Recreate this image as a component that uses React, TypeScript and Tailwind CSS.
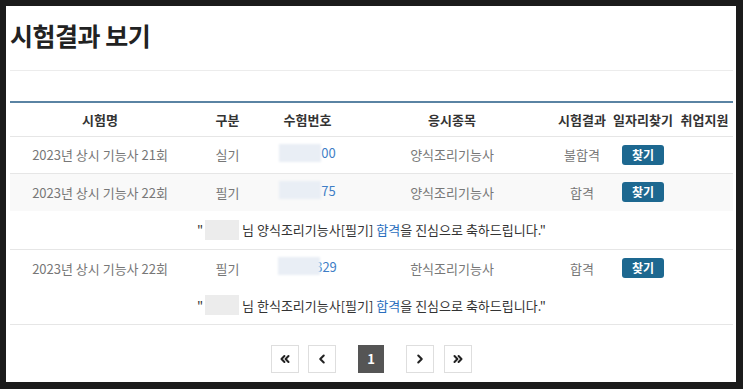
import { ChevronLeft, ChevronRight, ChevronsLeft, ChevronsRight } from 'lucide-react';

const font = { fontFamily: '"Noto Sans CJK KR", "Noto Sans", sans-serif' };

interface ResultRow {
  exam: string;
  type: string;
  numTail: string;
  subject: string;
  result: string;
  shaded?: boolean;
  message?: string;
  numCover?: number;
}

const rows: ResultRow[] = [
  { exam: '2023년 상시 기능사 21회', type: '실기', numTail: '00', subject: '양식조리기능사', result: '불합격' },
  {
    exam: '2023년 상시 기능사 22회',
    type: '필기',
    numTail: '75',
    subject: '양식조리기능사',
    result: '합격',
    shaded: true,
    message: '양식조리기능사[필기]',
  },
  {
    exam: '2023년 상시 기능사 22회',
    type: '필기',
    numTail: '329',
    subject: '한식조리기능사',
    result: '합격',
    message: '한식조리기능사[필기]',
    numCover: 5,
  },
];

export default function App() {
  return (
    <div className="w-[743px] h-[389px] bg-[#1b1b1b] pt-[6px] pl-[6px] pr-[7px] pb-[7px]" style={font}>
      <div className="h-full bg-white pl-[4px] pr-[3px]">
        {/* 제목 */}
        <div className="pt-[13px] pb-[19px] border-b border-[#ececec]">
          <h1 className="text-[25px] leading-[32px] font-bold text-[#222] tracking-[-0.5px]">시험결과 보기</h1>
        </div>

        <table className="w-full table-fixed mt-[30px] border-t-2 border-[#5a83a3] text-[13px]">
          <colgroup>
            <col className="w-[180px]" />
            <col className="w-[75px]" />
            <col className="w-[85px]" />
            <col className="w-[204px]" />
            <col className="w-[56px]" />
            <col className="w-[66px]" />
            <col className="w-[57px]" />
          </colgroup>
          <thead>
            <tr className="h-[34px] border-b border-[#e6e6e6] text-[#333] font-bold">
              <th className="font-bold">시험명</th>
              <th className="font-bold">구분</th>
              <th className="font-bold">수험번호</th>
              <th className="font-bold">응시종목</th>
              <th className="font-bold whitespace-nowrap">시험결과</th>
              <th className="font-bold whitespace-nowrap">일자리찾기</th>
              <th className="font-bold whitespace-nowrap">취업지원</th>
            </tr>
          </thead>
          <tbody>
            {rows.map((row, i) => (
              <ResultRows key={i} row={row} last={i === rows.length - 1} />
            ))}
          </tbody>
        </table>

        {/* 페이지 */}
        <div className="flex justify-center mt-[20px]">
          <PageButton>
            <ChevronsLeft size={14} strokeWidth={3.5} />
          </PageButton>
          <PageButton className="ml-[9px]">
            <ChevronLeft size={14} strokeWidth={3.5} />
          </PageButton>
          <div className="ml-[22px] w-[26px] h-[28px] bg-[#555] text-white font-bold text-[13px] flex items-center justify-center">
            1
          </div>
          <PageButton className="ml-[22px]">
            <ChevronRight size={14} strokeWidth={3.5} />
          </PageButton>
          <PageButton className="ml-[10px]">
            <ChevronsRight size={14} strokeWidth={3.5} />
          </PageButton>
        </div>
      </div>
    </div>
  );
}

function ResultRows({ row, last }: { row: ResultRow; last: boolean }) {
  return (
    <>
      <tr
        className={`text-[#777] text-center ${row.shaded ? 'bg-[#f9f9f9]' : ''} ${
          row.message ? 'h-[38px]' : 'h-[37px] border-b border-[#e6e6e6]'
        }`}
      >
        <td>{row.exam}</td>
        <td>{row.type}</td>
        <td>
          <span className="inline-flex items-center">
            <span
              className="relative z-10 w-[42px] h-[18px] bg-[#e9eef5] blur-[1px]"
              style={row.numCover ? { marginRight: -row.numCover } : undefined}
            />
            <span className="text-[#3f7ec6]">{row.numTail}</span>
          </span>
        </td>
        <td>{row.subject}</td>
        <td>{row.result}</td>
        <td>
          <button className="w-[42px] h-[20px] rounded-[3px] bg-[#1d6890] text-white text-[12px] font-bold leading-[20px]">
            찾기
          </button>
        </td>
        <td></td>
      </tr>
      {row.message && (
        <tr className={`border-b border-[#e6e6e6] ${last ? 'h-[37px]' : 'h-[38px]'}`}>
          <td colSpan={7} className="text-center text-[#333]">
            <span className="inline-flex items-center">
              "
              <span className="inline-block w-[34px] h-[20px] bg-[#ececec] blur-[0.5px] ml-[2px] mr-[3px]" />
              님 {row.message}&nbsp;<span className="text-[#2a6ebd]">합격</span>을 진심으로 축하드립니다."
            </span>
          </td>
        </tr>
      )}
    </>
  );
}

function PageButton({ children, className = '' }: { children: React.ReactNode; className?: string }) {
  return (
    <div
      className={`w-[28px] h-[28px] border border-[#dedede] bg-white text-[#222] flex items-center justify-center ${className}`}
    >
      {children}
    </div>
  );
}
